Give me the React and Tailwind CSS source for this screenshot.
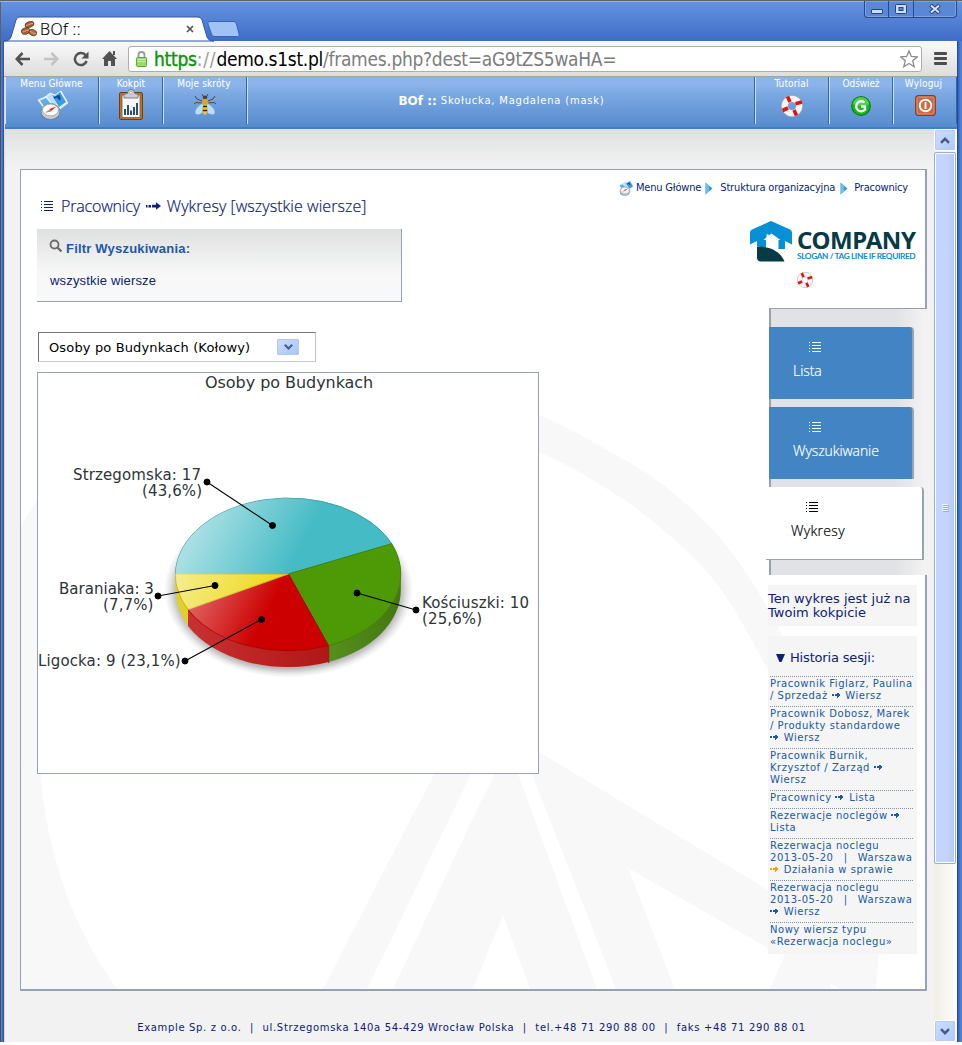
import React from "react";

const TAHOMA = "font-['DejaVu_Sans_Condensed','DejaVu_Sans',sans-serif]";
const VERDANA = "font-['DejaVu_Sans',sans-serif]";
const ARIAL = "font-['Liberation_Sans',sans-serif]";
const THIN = "font-['Open_Sans',sans-serif] font-light [-webkit-text-stroke:0.200px_currentColor]";

/* ---------- icons ---------- */

function BeansIcon() {
  return (
    <svg width="16" height="16" viewBox="0 0 16 16">
      <g stroke="#5e2c12" strokeWidth=".7">
        <ellipse cx="8.5" cy="3.5" rx="4.6" ry="2.8" fill="#a5633b" transform="rotate(-18 8.5 3.5)" />
        <ellipse cx="4.6" cy="10" rx="4.3" ry="3.2" fill="#a5633b" transform="rotate(-15 4.6 10)" />
        <ellipse cx="11.8" cy="11.6" rx="3.9" ry="3" fill="#b06d42" transform="rotate(20 11.8 11.6)" />
      </g>
      <g fill="none" stroke="#e2ab83" strokeWidth="1">
        <path d="M5 4.6c2-.2 3-2 7-2.2" />
        <path d="M1.2 11c2-.2 4-2 7-2" />
        <path d="M8.8 10.6c2 0 3 2 6 2.2" />
      </g>
    </svg>
  );
}

function CompassMapIcon({ size }) {
  return (
    <svg width={size} height={size} viewBox="0 0 31 31">
      <path d="M1 10l7-3 5-4 5 2 6-4 7 12-8 6-6-3-8 5z" fill="#dff0fc" stroke="#eef7ff" strokeWidth=".8" />
      <path d="M3 10.500l6-2.500 6 7-6 4z" fill="#5fb0e8" />
      <path d="M10 7l4-3 7 9-5 2z" fill="#b9e0fa" />
      <path d="M15 5l3 1 5-4 6 10-7 5z" fill="#3d9be0" />
      <path d="M17 8l5-2 1 3M20 6l3 4" fill="none" stroke="#0f4a9c" strokeWidth="1.800" />
      <ellipse cx="13" cy="25.500" rx="9" ry="4.500" fill="#4d6f9c" opacity=".55" />
      <ellipse cx="13.500" cy="21.500" rx="9.500" ry="8" fill="#c6ccd1" stroke="#7d868e" strokeWidth="1" />
      <ellipse cx="13.500" cy="20" rx="8" ry="6" fill="#fbfcfd" stroke="#a4abb2" strokeWidth="1" />
      <path d="M8 22.500l5-3.500 1.500 2z" fill="#9fb4c9" />
      <path d="M19.500 16.500l-7 2.500 1.500 2z" fill="#e2231a" />
      <path d="M8 22.800l5.500-3 .8 1.600z" fill="#ef6c62" />
    </svg>
  );
}

function ClipboardIcon() {
  return (
    <svg className="-mt-px -ml-px" width="26" height="32" viewBox="0 0 26 32">
      <rect x="1.500" y="3.500" width="23" height="27" rx="1.500" fill="#bd7228" stroke="#6f3d0e" />
      <rect x="4" y="6" width="18" height="22.500" fill="#f4f7f9" stroke="#8e5a20" strokeWidth=".8" />
      <path d="M6 9v-2.500c0-1.500 2-1.700 3.500-2C10 1.500 11 .5 13 .5s3 1 3.500 4c1.500.3 3.500.5 3.500 2V9z" fill="#c9cdcf" stroke="#74797c" strokeWidth=".9" />
      <circle cx="13" cy="3.700" r="1.300" fill="#fff" stroke="#888" strokeWidth=".5" />
      <g fill="#24527a">
        <rect x="6" y="20" width="2" height="6" />
        <rect x="9" y="16" width="2" height="10" />
        <rect x="12" y="21.500" width="2" height="4.500" />
        <rect x="15" y="18" width="2" height="8" />
        <rect x="18" y="14" width="2" height="12" />
      </g>
    </svg>
  );
}

function BeeIcon() {
  return (
    <svg className="-mt-px -ml-px" width="24" height="24" viewBox="0 0 24 24">
      <g fill="none" stroke="#59492f" strokeWidth="1">
        <path d="M9 8L4 6 2 3M15 8l5-2 2-3M9 10l-6-.5L1 11M15 10l6-.5 2 1.500M10.500 4L9 1M13.500 4L15 1" />
      </g>
      <path d="M10.500 9.500C6 12 1.500 16 2 20c1 3 6 2 8-1z" fill="#b9dcff" stroke="#5d9ff0" strokeWidth=".8" />
      <path d="M13.500 9.500C18 12 22.500 16 22 20c-1 3-6 2-8-1z" fill="#b9dcff" stroke="#5d9ff0" strokeWidth=".8" />
      <ellipse cx="12" cy="4.500" rx="2.200" ry="2" fill="#4d4030" />
      <ellipse cx="12" cy="9" rx="3" ry="3.200" fill="#d3a534" />
      <ellipse cx="12" cy="16.500" rx="2.700" ry="5.300" fill="#f2c42c" />
      <path d="M10 13.500h4M9.800 17.500h4.400" stroke="#33291a" strokeWidth="1.700" />
    </svg>
  );
}

function LifebuoyIcon({ size }) {
  return (
    <svg className="-ml-px" width={size} height={size} viewBox="0 0 22 22">
      <circle cx="11" cy="11" r="7.400" fill="none" stroke="#a9acb0" strokeWidth="7" />
      <circle cx="11" cy="11" r="7.200" fill="none" stroke="#f5f5f5" strokeWidth="6.200" />
      <path d="M6.500 1.500L9 7M21 7l-6.500 1.800M15.500 20.500l-2.500-5.500M1.500 15.500L7 13" stroke="#e3140f" strokeWidth="3.600" />
    </svg>
  );
}

function RefreshIcon() {
  return (
    <svg className="-ml-px" width="20" height="20" viewBox="0 0 20 20">
      <circle cx="10" cy="10" r="9.300" fill="#18b81c" stroke="#0a7d10" strokeWidth="1.200" />
      <path d="M2 8a8 7 0 0116 0c-4 2.500-12 2.500-16 0z" fill="#6fe070" opacity=".6" />
      <path d="M13.500 6.500a5 5 0 10.500 7M14 14.500V10.500h-4" fill="none" stroke="#fff" strokeWidth="2.300" />
    </svg>
  );
}

function PowerIcon() {
  return (
    <svg width="21" height="21" viewBox="0 0 21 21">
      <rect x=".7" y=".7" width="19.600" height="19.600" rx="2.500" fill="#cb6a42" stroke="#8d3a1c" strokeWidth="1.200" />
      <rect x="2" y="2" width="17" height="17" rx="1.500" fill="none" stroke="#e39a78" strokeWidth=".9" />
      <circle cx="10.500" cy="10.500" r="5.800" fill="none" stroke="#fff" strokeWidth="1.900" />
      <path d="M10.500 7v7" stroke="#fff" strokeWidth="2" />
    </svg>
  );
}

function ListIcon() {
  return (
    <svg width="12" height="11" viewBox="0 0 12 11" fill="currentColor" shapeRendering="crispEdges">
      {[0, 3, 6, 9].map((y) => (
        <React.Fragment key={y}>
          <rect x="0" y={y} width="1" height="1" />
          <rect x="3" y={y} width="9" height="1" />
        </React.Fragment>
      ))}
    </svg>
  );
}

function StepArrow({ orange }) {
  return (
    <svg className="mr-px inline-block align-baseline" width="9" height="6" viewBox="0 0 9 6" fill={orange ? "#ff9c00" : "currentColor"} shapeRendering="crispEdges">
      <rect x="0" y="1" width="2" height="2" />
      <rect x="3" y="1" width="1" height="2" />
      <rect x="4" y="1" width="4" height="2" />
      <path d="M5 0h1l3 2-3 2.500H5z" />
    </svg>
  );
}

function CrumbArrow() {
  return (
    <svg width="8" height="13" viewBox="0 0 8 13">
      <path d="M.5.500L7.500 6.500.500 12.500z" fill="#3399e0" />
      <path d="M.5.500L4 3.500v6L.500 12.500z" fill="#86caf3" opacity=".7" />
    </svg>
  );
}

/* ---------- browser window ---------- */

function TitleBar() {
  return (
    <div className="relative flex h-[41px] shrink-0 items-end bg-linear-to-b from-[#6693df] to-[#3f6dc7] border-t border-[#5f6163] pl-[12px] shadow-[inset_0_1px_0_#8fb2ea,inset_1px_0_0_#5f6163]">
      <div className="relative flex h-[24px] w-[195px] items-center">
        <svg className="absolute inset-0 overflow-visible" width="195" height="24" viewBox="0 0 195 24">
          <path d="M-8 24c5 0 6-2 7-4L4 3c1-2 2-3 4-3h177c3 0 4 1 5 3l5 17c1 2 2 4 7 4z" fill="#fdfdfd" stroke="#2f58ab" strokeWidth="1" />
        </svg>
        <div className="relative flex w-full items-center pl-[9px] pr-[13px]">
          <BeansIcon />
          <span className={THIN + " ml-[3px] text-[16px] leading-[20px] tracking-[0.350px] text-black"}>BOf ::</span>
          <svg className="ml-auto" width="8" height="8" viewBox="0 0 8 8">
            <path d="M1 1l6 6M7 1L1 7" stroke="#555" strokeWidth="1.700" />
          </svg>
        </div>
      </div>
      <svg className="mb-[4px] shrink-0" width="33" height="16" viewBox="0 0 33 16">
        <path d="M3 .5h23c2 0 3 1 3.500 2.500L32 13c.5 1.500 0 2.500-1.500 2.500H8c-2 0-3-1-3.500-2.500L1 3C.5 1.500 1.500.5 3 .5z" fill="#a0c3f4" stroke="#3864b6" />
      </svg>
      <div className="ml-auto mr-[5px] flex h-[17px] self-start overflow-hidden rounded-b-[4px] border border-t-0 border-[#26488e] bg-[#5b88d6] shadow-[inset_0_0_0_1px_#7ba3e6]">
        <div className="flex w-[24px] items-center justify-center border-r border-[#26488e] pt-[5px]">
          <div className="h-[5px] w-[12px] rounded-[1px] border border-[#2a4479] bg-[#c9dcf8]" />
        </div>
        <div className="flex w-[25px] items-center justify-center border-r border-[#26488e]">
          <svg width="12" height="10" viewBox="0 0 12 10">
            <rect x=".5" y=".5" width="11" height="9" rx="1" fill="#c9dcf8" stroke="#2a4479" />
            <rect x="4" y="3.500" width="4" height="3" fill="#5b88d6" stroke="#2a4479" />
          </svg>
        </div>
        <div className="flex w-[42px] items-center justify-center">
          <svg width="12" height="10" viewBox="0 0 12 10">
            <path d="M1.500 1l9 8M10.500 1l-9 8" stroke="#2a4479" strokeWidth="4" />
            <path d="M2 1.500l8 7M10 1.500l-8 7" stroke="#d3e3fb" strokeWidth="2" />
          </svg>
        </div>
      </div>
    </div>
  );
}

function Toolbar() {
  return (
    <div className="flex h-[36px] shrink-0 items-center border-b border-[#a3a5a0] bg-linear-to-b from-[#fafafa] to-[#dddddd] pl-[11px] pr-[10px]">
      <svg width="15" height="14" viewBox="0 0 15 14" fill="none" stroke="#525252" strokeWidth="2.600">
        <path d="M7.500 1L1.800 7l5.700 6M2 7h13" />
      </svg>
      <svg className="ml-[14px]" width="15" height="14" viewBox="0 0 15 14" fill="none" stroke="#c3c3c3" strokeWidth="2.600">
        <path d="M7.500 1l5.700 6-5.700 6M13 7H0" />
      </svg>
      <svg className="ml-[14px]" width="16" height="16" viewBox="0 0 16 16" fill="none">
        <path d="M12.800 4.600A6 6 0 1013.600 10" stroke="#525252" strokeWidth="2.500" />
        <path d="M15.500.5v7h-7z" fill="#525252" />
      </svg>
      <svg className="ml-[13px]" width="15" height="15" viewBox="0 0 15 15" fill="#525252">
        <path d="M7.500 0L15 8h-2v7H9v-5H6v5H2V8H0z" />
        <path d="M11 0h2v4h-2z" />
      </svg>
      <div className="ml-[11px] mt-px flex h-[26px] flex-1 items-center rounded-[3px] border border-[#adadad] bg-white pl-[7px] pr-[3px]">
        <svg width="11" height="16" viewBox="0 0 11 16">
          <path d="M2.500 8V4a3 3 0 016 0v4" fill="none" stroke="#9a9a9a" strokeWidth="1.800" />
          <rect x=".5" y="6.500" width="10" height="9" rx="1" fill="#94dd6d" stroke="#5aab3c" />
          <path d="M1.500 8.500h8M1.500 10.500h8" stroke="#c2f0a4" />
        </svg>
        <span className={TAHOMA + " ml-[7px] whitespace-nowrap text-[19px] leading-[22px] tracking-[-0.290px] text-[#7d7d7d]"}>
          <span className="tracking-[-0.250px] text-[#0a930a] [-webkit-text-stroke:0.400px_#0a930a]">https</span>
          <span className="tracking-[0.800px] text-[#9a9a9a]">://</span>
          <span className="text-black">demo.s1st.pl</span>/frames.php?dest=aG9tZS5waHA=
        </span>
        <svg className="ml-auto" width="18" height="18" viewBox="0 0 18 18" fill="#fff" stroke="#8b8b8b" strokeWidth="1.300">
          <path d="M9 1l2.300 5.500 6 .4-4.600 3.900 1.500 5.900L9 13.500l-5.200 3.200 1.500-5.900L.7 6.900l6-.4z" />
        </svg>
      </div>
      <svg className="ml-[12px]" width="13" height="13" viewBox="0 0 13 13" fill="#4d4d4d">
        <rect width="13" height="3" rx="1" />
        <rect y="5" width="13" height="3" rx="1" />
        <rect y="10" width="13" height="3" rx="1" />
      </svg>
    </div>
  );
}

/* ---------- application header ---------- */

function HeaderCell({ label, width, tracking, children }) {
  return (
    <div className={"flex h-[47px] flex-col items-center border-l border-[#d5e5f8] shadow-[inset_-1px_0_0_#2a66b4] " + width}>
      <span className={TAHOMA + " h-[13px] whitespace-nowrap text-[10px] leading-[14px] text-white " + tracking}>{label}</span>
      <div className="flex h-[31px] items-center justify-center">{children}</div>
    </div>
  );
}

function AppHeader() {
  return (
    <div className="flex h-[52px] shrink-0 border-b-2 border-[#3f80c5] bg-linear-to-b from-[#8cb4ea] from-15% via-[#7aa8e1] via-35% to-[#578bce]">
      <HeaderCell label="Menu Główne" width="w-[94px]" tracking="mr-[2px] tracking-[0.1px]"><CompassMapIcon size={31} /></HeaderCell>
      <HeaderCell label="Kokpit" width="w-[64px]" tracking="mr-px tracking-[0.1px]"><ClipboardIcon /></HeaderCell>
      <HeaderCell label="Moje skróty" width="w-[84px]" tracking="mr-[3px] tracking-[0.150px]"><BeeIcon /></HeaderCell>
      <div className="flex h-[47px] flex-1 items-center justify-center gap-[4px] whitespace-nowrap border-l border-[#d5e5f8] text-white shadow-[inset_-1px_0_0_#2a66b4]">
        <span className={VERDANA + " text-[12px] font-bold leading-[16px]"}>BOf ::</span>
        <span className={VERDANA + " text-[10px] leading-[16px] tracking-[0.780px]"}>Skołucka, Magdalena (mask)</span>
      </div>
      <HeaderCell label="Tutorial" width="w-[74px]" tracking="mr-[2px] tracking-[0.150px]"><LifebuoyIcon size={22} /></HeaderCell>
      <HeaderCell label="Odśwież" width="w-[64px]" tracking="mr-px tracking-[-0.1px]"><RefreshIcon /></HeaderCell>
      <HeaderCell label="Wyloguj" width="w-[64px]" tracking="mr-[4px] tracking-[0.200px]"><PowerIcon /></HeaderCell>
    </div>
  );
}

/* ---------- page panel ---------- */

function Watermark() {
  return (
    <svg className="absolute inset-0" width="904" height="819" viewBox="21 170 904 819" fill="#f8f8f8">
      <path d="M21 525L37 500V774h4C43 812 50 843 65 890C76 923 96 960 117 989H21z" />
      <path d="M539 415C574 429 606 450 637 467C667 485 692 508 713 530C740 560 763 597 783 637V700C740 615 720 582 693 557C667 532 640 509 607 489C586 475 562 462 539 452z" />
      <path d="M434 774h37L367 989h-44z" />
      <path d="M480 803L495 774h23L597 989h-67l-27-74-30 74h-80z" />
      <path d="M532 774l7-22L768 890V948L628 868 675 989h-59z" />
      <path d="M787 950h92l-3 39h-36l-9-5v5h-61z" />
    </svg>
  );
}

function Breadcrumb() {
  return (
    <div className={TAHOMA + " flex h-[26px] items-center justify-end whitespace-nowrap pr-[17px] pt-[10px] text-[11px] leading-[14px] text-[#071f73]"}>
      <CompassMapIcon size={16} />
      <span className="ml-[2px] tracking-[-0.180px]">Menu Główne</span>
      <span className="ml-[4px] mr-[7px]"><CrumbArrow /></span>
      <span className="tracking-[-0.160px]">Struktura organizacyjna</span>
      <span className="ml-[5px] mr-[6px]"><CrumbArrow /></span>
      <span className="tracking-[-0.200px]">Pracownicy</span>
    </div>
  );
}

function PageTitle() {
  return (
    <div className={THIN + " flex h-[20px] items-center whitespace-nowrap pl-[4px] text-[16px] leading-[20px] text-[#0c2278]"}>
      <ListIcon />
      <span className="ml-[8px] tracking-[-0.180px]">Pracownicy</span>
      <svg className="mx-[6px]" width="15" height="8" viewBox="0 0 15 8" fill="currentColor">
        <path d="M0 3h1.500v2.500H0zM2.500 3H5v2.500H2.500zM6 2.800h4V.3L15 4l-5 3.700V5.500H6z" />
      </svg>
      <span className="tracking-[0.050px]">Wykresy [wszystkie wiersze]</span>
    </div>
  );
}

function FilterBox() {
  return (
    <div className="mt-[13px] flex h-[73px] w-[365px] flex-col border-b border-r border-[#96a1b1] bg-linear-to-b from-[#dfe1e0] to-[#f8f8f8] to-65% pl-[12px] pt-[10px]">
      <div className="flex h-[18px] items-center">
        <svg className="-mt-[4px]" width="14" height="14" viewBox="0 0 14 14" fill="none" stroke="#6a6a6a">
          <circle cx="5.500" cy="5.500" r="4" strokeWidth="1.800" />
          <path d="M8.500 8.500l4 4" strokeWidth="2.300" />
        </svg>
        <span className={ARIAL + " ml-[3px] pt-[2px] text-[13px] font-bold leading-[18px] tracking-[0.200px] text-[#2059a8]"}>Filtr Wyszukiwania:</span>
      </div>
      <div className={ARIAL + " mt-[15px] pl-px text-[13px] leading-[18px] tracking-[0.170px] text-[#0c2278]"}>wszystkie wiersze</div>
    </div>
  );
}

function ChartSelect() {
  return (
    <div className="ml-px mt-[30px] flex h-[30px] w-[278px] items-center border border-b-[#c8c8c8] border-l-[#757575] border-r-[#c8c8c8] border-t-[#757575] bg-white pl-[10px] pr-[16px]">
      <span className={VERDANA + " whitespace-nowrap pt-[2px] text-[13px] leading-[18px] tracking-[0.140px] text-black"}>Osoby po Budynkach (Kołowy)</span>
      <div className="ml-auto flex h-[16px] w-[22px] items-center justify-center rounded-[1px] border border-[#b3c6f3] bg-linear-to-br from-[#cddafc] to-[#a9c5f8]">
        <svg width="9" height="6" viewBox="0 0 9 6" fill="none" stroke="#44608f" strokeWidth="2.200">
          <path d="M.8.8l3.700 3.700L8.200.8" />
        </svg>
      </div>
    </div>
  );
}

const CALLOUTS = [
  { from: [207, 482], to: [272.5, 525.5] },
  { from: [158, 596], to: [215, 585.5] },
  { from: [185, 661], to: [261.5, 619.500] },
  { from: [416, 610], to: [357, 593] },
];

function PieChart() {
  return (
    <svg className="mt-[10px] block border border-[#96a1b1] bg-white" width="502" height="402" viewBox="38 373 500 400">
      <defs>
        <radialGradient id="shade">
          <stop offset=".84" stopColor="#666" stopOpacity=".8" />
          <stop offset=".93" stopColor="#888" stopOpacity=".4" />
          <stop offset="1" stopColor="#ccc" stopOpacity=".08" />
        </radialGradient>
        <linearGradient id="gloss" gradientUnits="userSpaceOnUse" x1="184" y1="512" x2="291" y2="568">
          <stop offset="0" stopColor="#fff" stopOpacity=".64" />
          <stop offset="1" stopColor="#fff" stopOpacity="0" />
        </linearGradient>
        <linearGradient id="redSide"><stop offset="0" stopColor="#c93030" /><stop offset="1" stopColor="#b01717" /></linearGradient>
        <linearGradient id="greenSide"><stop offset="0" stopColor="#55901e" /><stop offset="1" stopColor="#44770f" /></linearGradient>
      </defs>
      <ellipse cx="288.500" cy="590" rx="124" ry="87" fill="url(#shade)" />
      <path d="M175.500 574a113 77 0 0012.500 35.500v16A113 77 0 01175.500 590z" fill="#dfd02e" />
      <path d="M188 609.500a113 77 0 00140.500 36.200v16.300a113 77 0 01-140.500-36z" fill="url(#redSide)" />
      <path d="M328.500 645.700a113 77 0 0072.300-71.700v16a113 77 0 01-72.300 72z" fill="url(#greenSide)" />
      <g strokeWidth="1" strokeLinejoin="round">
        <path d="M288.500 574H175.500A113 77 0 01391.700 543.700z" fill="#45bbc5" stroke="#38a0a8" />
        <path d="M288.500 574L391.700 543.700A113 77 0 01328.500 645.700z" fill="#4e9a06" stroke="#418405" />
        <path d="M288.500 574L328.500 645.700A113 77 0 01188 609.500z" fill="#cc0000" stroke="#ad0000" />
        <path d="M288.500 574L188 609.500A113 77 0 01175.500 574z" fill="#edd815" stroke="#c5b210" />
      </g>
      <path d="M288.500 574L391.700 543.700A113 77 0 00175.500 574 113 77 0 00328.500 645.700z" fill="url(#gloss)" />
      <path d="M328.700 646v17" stroke="#b00a0a" />
      {CALLOUTS.map(({ from, to }) => (
        <g key={from[0]} stroke="#000">
          <path d={`M${from[0]} ${from[1]}L${to[0]} ${to[1]}`} strokeWidth="1.100" />
          <circle cx={from[0]} cy={from[1]} r="3" />
          <circle cx={to[0]} cy={to[1]} r="3" />
        </g>
      ))}
      <g className={VERDANA + " text-[15px] tracking-[0.120px]"} fill="#2e3436">
        <text className="text-[16px] tracking-[-0.050px]" x="205" y="388">Osoby po Budynkach</text>
        <text x="73" y="480">Strzegomska: 17</text>
        <text x="142" y="496">(43,6%)</text>
        <text x="59" y="594" className="tracking-[0.020px]">Baraniaka: 3</text>
        <text x="103" y="610">(7,7%)</text>
        <text x="38" y="666">Ligocka: 9 (23,1%)</text>
        <text x="422" y="608">Kościuszki: 10</text>
        <text x="422" y="624">(25,6%)</text>
      </g>
    </svg>
  );
}

function CompanyLogo() {
  return (
    <div className="flex h-[42px] w-[170px] items-start whitespace-nowrap">
      <svg className="shrink-0" width="43" height="41" viewBox="0 0 43 41">
        <path d="M21 0L40 8.500Q42 9.500 42 11.500V23.500L35 20v8h-6.500V19H30.500L21.500 12.500 18.500 14.700V13.200H16.500V16.200L13.500 19H16v8L7 25V20L0 23.500V11.500Q0 9.500 2 8.500z" fill="#0590d5" />
        <path d="M7 25.500C20 25.500 30 30 34.500 40.500H11q-4 0-4-4z" fill="#063b45" />
      </svg>
      <div className="ml-[4px] flex flex-col pt-[6px]">
        <span className="font-['Noto_Sans',sans-serif] text-[24px] font-bold leading-[25px] tracking-[-0.400px] text-[#063b45]">COMPANY</span>
        <span className="font-['Lato',sans-serif] text-[8.300px] font-bold leading-[9px] tracking-[-0.400px] text-[#0a8fce]">SLOGAN / TAG LINE IF REQUIRED</span>
      </div>
    </div>
  );
}

function SideTab({ label, tracking }) {
  return (
    <div className="h-[72px] w-[145px] rounded-tr-[4px] border-r-2 border-[#97a6ad] bg-[#4384c5] pl-[24px] pt-[15px] text-white">
      <div className="pl-[16px]"><ListIcon /></div>
      <div className={THIN + " mt-[9px] whitespace-nowrap text-[14px] leading-[18px] " + tracking}>{label}</div>
    </div>
  );
}

function ActiveSideTab({ label }) {
  return (
    <div className="-ml-[3px] h-[73px] w-[158px] rounded-tr-[4px] border-b border-r-2 border-[#97a6ad] bg-white pl-[25px] pt-[15px] text-black">
      <div className="pl-[15px]"><ListIcon /></div>
      <div className={THIN + " mt-[9px] whitespace-nowrap text-[14px] leading-[18px] tracking-[0.300px]"}>{label}</div>
    </div>
  );
}

function SideMenu() {
  return (
    <div className="flex h-[267px] w-[158px] shrink-0 flex-col border-t border-[#96a1b1] bg-linear-to-r from-[#e1e2e5] from-80% to-[#f2f2f2] to-98% shadow-[inset_2px_0_0_#96a1b1]">
      <div className="mt-[18px] flex flex-col gap-[8px]">
        <SideTab label="Lista" tracking="tracking-[-0.050px]" />
        <SideTab label="Wyszukiwanie" tracking="tracking-[-0.080px]" />
        <ActiveSideTab label="Wykresy" />
      </div>
    </div>
  );
}

const HISTORY = [
  ["Pracownik Figlarz, Paulina", ["/ Sprzedaż ", "a", " Wiersz"]],
  ["Pracownik Dobosz, Marek", "/ Produkty standardowe", ["", "a", " Wiersz"]],
  ["Pracownik Burnik,", ["Krzysztof / Zarząd ", "a", ""], "Wiersz"],
  [["Pracownicy ", "a", " Lista"]],
  [["Rezerwacje noclegów ", "a", ""], "Lista"],
  ["Rezerwacja noclegu", "2013-05-20\u00a0 |\u00a0 Warszawa", ["", "o", " Działania w sprawie"]],
  ["Rezerwacja noclegu", "2013-05-20\u00a0 |\u00a0 Warszawa", ["", "a", " Wiersz"]],
  ["Nowy wiersz typu", "«Rezerwacja noclegu»"],
];

function HistoryBox() {
  return (
    <div className="mt-[10px] flex h-[318px] w-[149px] flex-col bg-[#f5f5f5] pl-[2px] pr-[4px]">
      <div className={VERDANA + " flex h-[40px] items-center gap-[5px] pl-[6px] pt-[3px] text-[13px] leading-[18px] tracking-[-0.170px] text-[#0c2278]"}>
        <svg width="9" height="8" viewBox="0 0 9 8" fill="currentColor"><path d="M0 0h9L5.500 8H3.500z" /></svg>
        Historia sesji:
      </div>
      {HISTORY.map((lines, i) => (
        <div key={i} className={VERDANA + " border-t border-dotted border-[#8291a8] pb-[4px] pt-px text-[10px] leading-[12px] tracking-[0.530px] text-[#2059a8]"}>
          {lines.map((line, j) => (
            <div key={j} className={"h-[12px] whitespace-nowrap " + (line.includes("|") ? "[word-spacing:1.400px]" : "")}>
              {Array.isArray(line) ? <>{line[0]}<StepArrow orange={line[1] === "o"} />{line[2]}</> : line}
            </div>
          ))}
        </div>
      ))}
    </div>
  );
}

function Panel() {
  return (
    <div className="relative ml-[15px] mt-[40px] h-[822px] w-[907px] shrink-0 border border-b-2 border-r-2 border-[#96a1b1] bg-white">
      <Watermark />
      <div className="relative">
        <Breadcrumb />
        <div className="flex">
          <div className="flex w-[729px] shrink-0 flex-col pl-[16px]">
            <PageTitle />
            <FilterBox />
            <ChartSelect />
            <PieChart />
          </div>
          <div className="flex flex-col pt-[25px]">
            <CompanyLogo />
            <div className="ml-[48px] mt-[9px] h-[36px]"><LifebuoyIcon size={16} /></div>
            <div className="ml-[19px]"><SideMenu /></div>
            <div className="ml-[18px] mt-[10px] h-[41px] w-[149px] bg-[#f5f5f5] pt-[7px]">
              <div className={VERDANA + " whitespace-nowrap text-[13px] leading-[14px] text-[#0c2278]"}>Ten wykres jest już na<br />Twoim kokpicie</div>
            </div>
            <div className="ml-[18px]"><HistoryBox /></div>
          </div>
        </div>
      </div>
    </div>
  );
}

function ScrollButton({ down }) {
  return (
    <div className="flex h-[22px] w-[22px] shrink-0 items-center justify-center rounded-[2px] border border-white bg-linear-to-br from-[#cfdcfd] to-[#aecafb] shadow-[inset_0_0_0_1px_#b9cbf5]">
      <svg className={down ? "rotate-180" : ""} width="10" height="7" viewBox="0 0 10 7" fill="none" stroke="#435a86" strokeWidth="2.400">
        <path d="M1 5.800l4-4 4 4" />
      </svg>
    </div>
  );
}

function ScrollBar() {
  return (
    <div className="flex w-[23px] shrink-0 flex-col bg-linear-to-r from-[#efede6] to-[#fefefa] pr-px">
      <ScrollButton />
      <div className="mt-px flex h-[712px] w-[22px] shrink-0 items-center justify-center rounded-[2px] border border-[#8fadea] bg-linear-to-r from-[#c5d4fb] from-60% to-[#b0c9fb] shadow-[inset_0_0_0_1px_#ffffff]">
        <svg width="7" height="8" viewBox="0 0 7 8" shapeRendering="crispEdges">
          <path d="M0 .5h6M0 2.500h6M0 4.500h6M0 6.500h6" stroke="#eef4fe" />
          <path d="M1 1.500h6M1 3.500h6M1 5.500h6M1 7.500h6" stroke="#8cb0f8" />
        </svg>
      </div>
      <div className="mt-auto"><ScrollButton down /></div>
    </div>
  );
}

export default function App() {
  return (
    <div className="flex h-[1045px] w-[962px] flex-col overflow-hidden bg-white">
      <TitleBar />
      <div className="flex h-[1001px] shrink-0">
        <div className="w-[4px] shrink-0 bg-linear-to-r from-[#4a4f58] from-25% via-[#5b87d6] via-26% to-[#2a4f9c]" />
        <div className="flex min-w-0 flex-1 flex-col">
          <Toolbar />
          <div className="flex h-[965px] flex-col bg-[#d9d9d5] pl-px">
            <AppHeader />
            <div className="flex h-[913px]">
              <div className="flex min-w-0 flex-1 flex-col bg-[#f2f2f2] bg-linear-to-b from-[#dfe1e0] to-[#f2f2f2] to-[38px]">
                <Panel />
                <div className={VERDANA + " mt-[30px] flex justify-center gap-[8.500px] whitespace-nowrap pl-[4px] text-[10px] leading-[14px] tracking-[0.670px] text-[#0c2278]"}>
                  <span>Example Sp. z o.o.</span>
                  <span>|</span>
                  <span>ul.Strzegomska 140a 54-429 Wrocław Polska</span>
                  <span>|</span>
                  <span>tel.+48 71 290 88 00</span>
                  <span>|</span>
                  <span>faks +48 71 290 88 01</span>
                </div>
              </div>
              <ScrollBar />
            </div>
          </div>
        </div>
        <div className="w-[5px] shrink-0 bg-linear-to-r from-[#2a4a8a] from-20% via-[#3567c4] via-30% to-[#5b87d6]" />
      </div>
    </div>
  );
}
